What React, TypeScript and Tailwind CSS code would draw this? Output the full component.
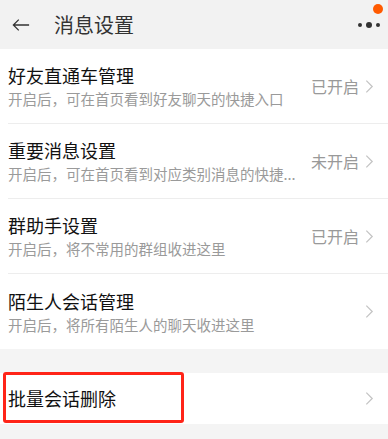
const rows = [
  {
    title: "好友直通车管理",
    desc: "开启后，可在首页看到好友聊天的快捷入口",
    status: "已开启",
  },
  {
    title: "重要消息设置",
    desc: "开启后，可在首页看到对应类别消息的快捷...",
    status: "未开启",
  },
  {
    title: "群助手设置",
    desc: "开启后，将不常用的群组收进这里",
    status: "已开启",
  },
  {
    title: "陌生人会话管理",
    desc: "开启后，将所有陌生人的聊天收进这里",
    status: "",
  },
];

const Chevron = () => (
  <svg viewBox="0 0 10 16" className="h-[15px] w-[9px]" fill="none">
    <path d="M1.5 1.5L8 8l-6.5 6.5" stroke="#c4c4c4" strokeWidth={1.4} />
  </svg>
);

const App = () => {
  return (
    <div className="h-[439px] w-full overflow-hidden bg-[#f4f4f4] font-['Noto_Sans_CJK_SC','Noto_Sans',sans-serif]">
      <div className="relative flex h-[49px] items-center bg-[#f2f2f2]">
        <svg
          viewBox="0 0 20 14"
          className="ml-[12px] h-[14px] w-[18px]"
          fill="none"
          stroke="#333"
          strokeWidth={1.4}
        >
          <path d="M19 7H1.5M7.5 1L1.5 7l6 6" />
        </svg>
        <span className="ml-[24px] text-[20px] leading-none text-[#333]">
          消息设置
        </span>
        <div className="ml-auto mr-[8px] mt-[1px] flex items-center gap-[4px]">
          <span className="h-[4px] w-[4px] rounded-full bg-[#333]" />
          <span className="h-[6px] w-[6px] rounded-full bg-[#333]" />
          <span className="h-[4px] w-[4px] rounded-full bg-[#333]" />
        </div>
        <span className="absolute right-[5px] top-[4px] h-[10px] w-[10px] rounded-full bg-[#ff5a00]" />
      </div>

      <div className="bg-white">
        {rows.map((r, i) => (
          <div key={r.title} className="pl-[8px]">
            <div
              className={
                "flex h-[75px] items-center pr-[14px] " +
                (i < rows.length - 1 ? "border-b border-[#ededed]" : "")
              }
            >
              <div className="flex flex-col">
                <span className="text-[18px] leading-[24px] text-[#111]">
                  {r.title}
                </span>
                <span className="mt-[2px] text-[14.5px] leading-[20px] text-[#9a9a9a]">
                  {r.desc}
                </span>
              </div>
              <div className="ml-auto flex items-center gap-[6px]">
                {r.status && (
                  <span className="text-[16px] text-[#999]">{r.status}</span>
                )}
                <Chevron />
              </div>
            </div>
          </div>
        ))}
      </div>

      <div className="mt-[24px] bg-white">
        <div className="relative flex h-[51px] items-center pl-[8px] pr-[14px]">
          <span className="text-[18px] text-[#111]">批量会话删除</span>
          <div className="ml-auto">
            <Chevron />
          </div>
          <div className="absolute left-[3px] top-[-1px] h-[51px] w-[181px] rounded-[3px] border-[3px] border-[#ff2418]" />
        </div>
      </div>
    </div>
  );
};

export default App;
